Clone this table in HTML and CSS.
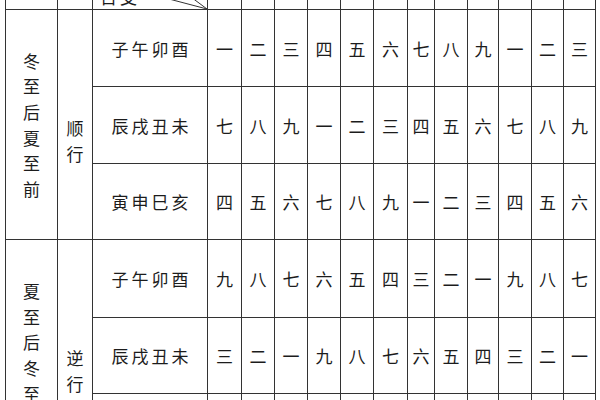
FILE: index.html
```html
<!DOCTYPE html>
<html lang="zh">
<head>
<meta charset="utf-8">
<link rel="stylesheet" href="styles.css">
</head>
<body>
<div class="grid">
  <div class="cell head"></div>
  <div class="cell head"></div>
  <div class="cell head diag">
    <svg class="diag-lines" viewBox="0 0 114 50" width="114" height="50" preserveAspectRatio="none">
      <line x1="0" y1="20" x2="114" y2="50" stroke="#333" stroke-width="1"/>
      <line x1="47" y1="0" x2="114" y2="50" stroke="#333" stroke-width="1"/>
    </svg>
    <span class="head-label">日支</span>
  </div>
  <div class="cell head"></div><div class="cell head"></div><div class="cell head"></div>
  <div class="cell head"></div><div class="cell head"></div><div class="cell head"></div>
  <div class="cell head"></div><div class="cell head"></div><div class="cell head"></div>
  <div class="cell head"></div><div class="cell head"></div><div class="cell head"></div>

  <div class="cell season s1"><span class="vtext">冬至后夏至前</span></div>
  <div class="cell dir d1"><span class="vtext">顺行</span></div>
  <div class="cell label">子午卯酉</div>
  <div class="cell num">一</div><div class="cell num">二</div><div class="cell num">三</div><div class="cell num">四</div><div class="cell num">五</div><div class="cell num">六</div><div class="cell num">七</div><div class="cell num">八</div><div class="cell num">九</div><div class="cell num">一</div><div class="cell num">二</div><div class="cell num">三</div>

  <div class="cell label">辰戌丑未</div>
  <div class="cell num">七</div><div class="cell num">八</div><div class="cell num">九</div><div class="cell num">一</div><div class="cell num">二</div><div class="cell num">三</div><div class="cell num">四</div><div class="cell num">五</div><div class="cell num">六</div><div class="cell num">七</div><div class="cell num">八</div><div class="cell num">九</div>

  <div class="cell label">寅申巳亥</div>
  <div class="cell num">四</div><div class="cell num">五</div><div class="cell num">六</div><div class="cell num">七</div><div class="cell num">八</div><div class="cell num">九</div><div class="cell num">一</div><div class="cell num">二</div><div class="cell num">三</div><div class="cell num">四</div><div class="cell num">五</div><div class="cell num">六</div>

  <div class="cell season s2"><span class="vtext">夏至后冬至前</span></div>
  <div class="cell dir d2"><span class="vtext">逆行</span></div>
  <div class="cell label">子午卯酉</div>
  <div class="cell num">九</div><div class="cell num">八</div><div class="cell num">七</div><div class="cell num">六</div><div class="cell num">五</div><div class="cell num">四</div><div class="cell num">三</div><div class="cell num">二</div><div class="cell num">一</div><div class="cell num">九</div><div class="cell num">八</div><div class="cell num">七</div>

  <div class="cell label">辰戌丑未</div>
  <div class="cell num">三</div><div class="cell num">二</div><div class="cell num">一</div><div class="cell num">九</div><div class="cell num">八</div><div class="cell num">七</div><div class="cell num">六</div><div class="cell num">五</div><div class="cell num">四</div><div class="cell num">三</div><div class="cell num">二</div><div class="cell num">一</div>

  <div class="cell label">寅申巳亥</div>
  <div class="cell num">六</div><div class="cell num">五</div><div class="cell num">四</div><div class="cell num">三</div><div class="cell num">二</div><div class="cell num">一</div><div class="cell num">九</div><div class="cell num">八</div><div class="cell num">七</div><div class="cell num">六</div><div class="cell num">五</div><div class="cell num">四</div>
</div>
</body>
</html>
```
FILE: styles.css
```css
html, body {
  margin: 0;
  padding: 0;
  background: #fff;
  overflow: hidden;
  width: 600px;
  height: 400px;
}

.grid {
  display: grid;
  grid-template-columns: 51px 34px 114px 33px 32px 32px 32px 32px 33px 26px 32px 30px 32px 31px 31px;
  grid-template-rows: 50px 76px 76px 75px 77px 75px 76px;
  gap: 1px;
  padding: 1px;
  background: #333;
  width: max-content;
  margin-left: 5px;
  margin-top: -42px;
  font-family: "Noto Sans CJK SC", "Noto Sans", sans-serif;
  color: #1c1c1c;
}

.cell {
  background: #fff;
  display: flex;
  align-items: center;
  justify-content: center;
}

.diag {
  position: relative;
  justify-content: flex-start;
  align-items: flex-end;
}

.diag-lines {
  position: absolute;
  left: 0;
  top: 0;
}

.head-label {
  font-size: 17px;
  letter-spacing: 3px;
  line-height: 20px;
  padding-left: 7px;
  margin-bottom: 2px;
}

.season {
  grid-column: 1;
}
.s1 { grid-row: 2 / span 3; }
.s2 { grid-row: 5 / span 3; }

.dir {
  grid-column: 2;
  padding-top: 32px;
}
.d1 { grid-row: 2 / span 3; }
.d2 { grid-row: 5 / span 3; }

.vtext {
  display: block;
  width: 17px;
  font-size: 17px;
  line-height: 25.6px;
  text-align: center;
  word-break: break-all;
}

.label {
  font-size: 17px;
  letter-spacing: 3px;
  padding-left: 3px;
}

.num {
  font-size: 17px;
}
```
